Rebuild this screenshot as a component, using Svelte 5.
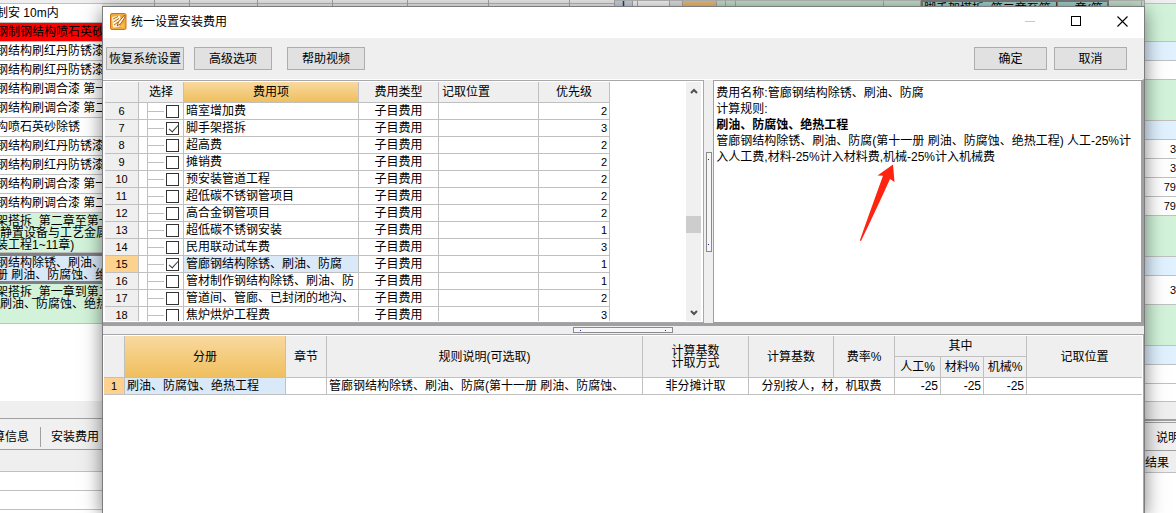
<script>
    const backLeft = [
        { h: 4, bg: '#efefef', lines: [] },
        { h: 19, bg: '#fff', lines: ['制安 10m内'] },
        { h: 19, bg: '#ff0000', lines: ['钢制钢结构喷石英砂'] },
        { h: 19, bg: '#fff', lines: ['钢结构刷红丹防锈漆'] },
        { h: 19, bg: '#fff', lines: ['钢结构刷红丹防锈漆'] },
        { h: 19, bg: '#fff', lines: ['钢结构刷调合漆 第一'] },
        { h: 19, bg: '#fff', lines: ['钢结构刷调合漆 第二'] },
        { h: 19, bg: '#fff', lines: ['构喷石英砂除锈'] },
        { h: 19, bg: '#fff', lines: ['钢结构刷红丹防锈漆'] },
        { h: 19, bg: '#fff', lines: ['钢结构刷红丹防锈漆'] },
        { h: 19, bg: '#fff', lines: ['钢结构刷调合漆 第一'] },
        { h: 19, bg: '#fff', lines: ['钢结构刷调合漆 第二'] },
        { h: 40, bg: '#d2f3da', lines: ['架搭拆_第二章至第一', '(静置设备与工艺金属', '装工程1~11章)'] },
        { h: 31, bg: '#d9e9f8', current: true, lines: ['钢结构除锈、刷油、', '册 刷油、防腐蚀、绝'] },
        { h: 40, bg: '#d2f3da', top: true, lines: ['架搭拆_第一章到第二', '(刷油、防腐蚀、绝热'] },
    ]

    const backRight = [
        { h: 4, bg: '#efefef' },
        { h: 38, bg: '#d2f3da' },
        { h: 19, bg: '#e0f2ff' },
        { h: 19, bg: '#fff' },
        { h: 41, bg: '#d2f3da' },
        { h: 19, bg: '#e0f2ff' },
        { h: 19, bg: '#fff', value: '3' },
        { h: 19, bg: '#fff', value: '3' },
        { h: 19, bg: '#fff', value: '79' },
        { h: 19, bg: '#fff', value: '79' },
        { h: 41, bg: '#d2f3da' },
        { h: 19, bg: '#e0f2ff' },
        { h: 29, bg: '#fff', value: '3' },
        { h: 41, bg: '#d2f3da' },
        { h: 19, bg: '#e0f2ff' },
        { h: 19, bg: '#fff' },
        { h: 18, bg: '#fff' },
    ]

    const strip = [
        { w: 53, bg: '#ececec', lined: true },
        { w: 35, bg: '#ececec', lined: true },
        { w: 68, bg: '#ececec', lined: true },
        { w: 75, bg: '#ececec', lined: true },
        { w: 75, bg: '#ececec', lined: true },
        { w: 81, bg: '#ececec', lined: true },
        { w: 81, bg: '#ececec', lined: true },
        { w: 45, bg: '#ececec', lined: true },
        { w: 8, bg: '#c3d2e4' },
        { w: 2, bg: '#3c3c40' },
        { w: 8, bg: '#c3d2e4' },
        { w: 5, bg: '#f4f4f4' },
        { w: 32, bg: '#f4f4f4' },
        { w: 13, bg: '#dedede' },
        { w: 34, bg: '#eabd74' },
        { w: 9, bg: '#bfe0c8' },
        { w: 10, bg: '#bfe0c8' },
        { w: 148, bg: '#bfe0c8' },
        { w: 37, bg: '#bfe0c8' },
        { w: 188, bg: '#9fcfc8', text: '脚手架搭拆_第二章至第十一章(第' },
        { w: 33, bg: '#bfe0c8' },
        { w: 3, bg: '#bfe0c8' },
    ]

    let fees = $state([
        { id: 6, name: '暗室增加费', level: 2, checked: false },
        { id: 7, name: '脚手架搭拆', level: 3, checked: true },
        { id: 8, name: '超高费', level: 2, checked: false },
        { id: 9, name: '摊销费', level: 2, checked: false },
        { id: 10, name: '预安装管道工程', level: 2, checked: false },
        { id: 11, name: '超低碳不锈钢管项目', level: 2, checked: false },
        { id: 12, name: '高合金钢管项目', level: 2, checked: false },
        { id: 13, name: '超低碳不锈钢安装', level: 1, checked: false },
        { id: 14, name: '民用联动试车费', level: 3, checked: false },
        { id: 15, name: '管廊钢结构除锈、刷油、防腐', level: 1, checked: true },
        { id: 16, name: '管材制作钢结构除锈、刷油、防', level: 1, checked: false },
        { id: 17, name: '管道间、管廊、已封闭的地沟、', level: 2, checked: false },
        { id: 18, name: '焦炉烘炉工程费', level: 3, checked: false },
    ])
    let selected = $state(15)
</script>

<div class="screen">
    <div class="backdrop">
        <div class="back-left">
            {#each backLeft as row}
                <div class="back-row" class:current={row.current} class:top={row.top} style="height: {row.h}px; background: {row.bg}">
                    {#each row.lines as line}
                        <div class="back-line">{line}</div>
                    {/each}
                </div>
            {/each}
            <div class="filler"></div>
            <div class="back-scroll"></div>
            <div class="back-tabs">
                <span class="tab-left">算信息</span>
                <span class="tab-right">安装费用</span>
            </div>
            <div class="back-head"></div>
            <div class="back-blank"></div>
            <div class="back-blank"></div>
        </div>
        <div class="strip">
            {#each strip as cell}
                <div class="strip-cell" class:lined={cell.lined} class:teal={cell.text} style="flex: 1 1 {cell.w}px; background-color: {cell.bg}">{cell.text ?? ''}</div>
            {/each}
        </div>
        <div class="back-right">
            {#each backRight as row}
                <div class="back-row value" style="height: {row.h}px; background: {row.bg}">{row.value ?? ''}</div>
            {/each}
            <div class="back-scroll"></div>
            <div class="back-tabs right"><span>说明</span></div>
            <div class="back-head">结果</div>
        </div>
    </div>

    <div class="dialog" role="dialog" aria-labelledby="dialog-title">
        <div class="title-bar">
            <svg class="logo" width="17" height="17" viewBox="0 0 17 17">
                <rect x="0.5" y="0.5" width="15.5" height="16" rx="1.5" fill="#f0a93a" stroke="#cd7412" />
                <path d="M2 4 L10 2.5 L11 9 L9 14 L3 14.5 Z" fill="#fff3d2" />
                <path d="M3 6 L8 3.5 M3.5 9 L9 5.5 M4 12 L9 8.5" stroke="#b56a16" />
                <path d="M14.5 2 L8.5 9 L7 13 L11 10.5 L15 4 Z" fill="#fff8e6" stroke="#a94e0a" stroke-width="0.9" />
                <path d="M10 14 L14 10 L14 14.5 Z" fill="#f8c44e" />
            </svg>
            <span id="dialog-title" class="title">统一设置安装费用</span>
            <button class="win-button" aria-label="最小化" disabled>
                <svg width="11" height="11"><path d="M0 5.5 H10" stroke="#c8c8c8" /></svg>
            </button>
            <button class="win-button" aria-label="最大化">
                <svg width="11" height="11"><rect x="0.5" y="0.5" width="9" height="9" fill="none" stroke="#000" /></svg>
            </button>
            <button class="win-button" aria-label="关闭">
                <svg width="11" height="11"><path d="M0.5 0.5 L10.5 10.5 M10.5 0.5 L0.5 10.5" stroke="#000" stroke-width="1.1" /></svg>
            </button>
        </div>

        <div class="toolbar">
            <button class="default-button">恢复系统设置</button>
            <button class="default-button second">高级选项</button>
            <button class="default-button third">帮助视频</button>
            <button class="default-button small ok">确定</button>
            <button class="default-button small">取消</button>
        </div>

        <div class="upper">
            <div class="fee-panel">
                <div class="fee-scroll">
                    <table class="grid fee-table">
                        <colgroup>
                            <col style="width: 34px" /><col style="width: 45px" /><col style="width: 175px" />
                            <col style="width: 80px" /><col style="width: 100px" /><col style="width: 71px" />
                        </colgroup>
                        <thead>
                            <tr>
                                <th></th>
                                <th>选择</th>
                                <th class="active">费用项</th>
                                <th>费用类型</th>
                                <th class="left">记取位置</th>
                                <th>优先级</th>
                            </tr>
                        </thead>
                        <tbody>
                            {#each fees as fee}
                                <tr class:selected={fee.id === selected} onclick={() => (selected = fee.id)}>
                                    <th class="digits">{fee.id}</th>
                                    <td class="pick">
                                        <div class="tree">
                                            <i></i>
                                            <input type="checkbox" id="fee-{fee.id}" bind:checked={fee.checked} />
                                        </div>
                                    </td>
                                    <td class="name"><label for="fee-{fee.id}">{fee.name}</label></td>
                                    <td class="center">子目费用</td>
                                    <td></td>
                                    <td class="number digits">{fee.level}</td>
                                </tr>
                            {/each}
                        </tbody>
                    </table>
                </div>
                <div class="scrollbar">
                    <button aria-label="向上滚动">
                        <svg width="8" height="6"><path d="M1 5 L4 2 L7 5" fill="none" stroke="#505050" stroke-width="2" /></svg>
                    </button>
                    <div class="track-before"></div>
                    <div class="thumb"></div>
                    <div class="track-after"></div>
                    <button aria-label="向下滚动">
                        <svg width="8" height="6"><path d="M1 1 L4 4 L7 1" fill="none" stroke="#505050" stroke-width="2" /></svg>
                    </button>
                </div>
            </div>
            <div class="splitter-v"><div class="grip grip-v"><i></i><i></i></div></div>
            <div class="detail">
                <p>费用名称:管廊钢结构除锈、刷油、防腐</p>
                <p>计算规则:</p>
                <p><b>刷油、防腐蚀、绝热工程</b></p>
                <p>管廊钢结构除锈、刷油、防腐(第十一册 刷油、防腐蚀、绝热工程) 人工-25%计<br />入人工费,材料-25%计入材料费,机械-25%计入机械费</p>
                <svg class="arrow" width="36" height="78" viewBox="0 0 36 78">
                    <path d="M34 0.5 L18.5 11.5 L24 11.8 Q13 42 0.8 76.5 L2 77 Q18 44 31 15 L35.5 18 Z" fill="#ff2412" />
                </svg>
            </div>
        </div>

        <div class="splitter-h"><div class="grip grip-h"><i></i><i></i></div></div>

        <div class="lower">
            <table class="grid rule-table">
                <colgroup>
                    <col style="width: 21px" /><col style="width: 161px" /><col style="width: 41px" />
                    <col style="width: 316px" /><col style="width: 106px" /><col style="width: 85px" />
                    <col style="width: 61px" /><col style="width: 46px" /><col style="width: 43px" />
                    <col style="width: 43px" /><col />
                </colgroup>
                <thead>
                    <tr>
                        <th rowspan="2"></th>
                        <th rowspan="2" class="active">分册</th>
                        <th rowspan="2">章节</th>
                        <th rowspan="2">规则说明(可选取)</th>
                        <th rowspan="2" class="two-line">计算基数<br />计取方式</th>
                        <th rowspan="2">计算基数</th>
                        <th rowspan="2">费率%</th>
                        <th colspan="3">其中</th>
                        <th rowspan="2">记取位置</th>
                    </tr>
                    <tr>
                        <th>人工%</th>
                        <th>材料%</th>
                        <th>机械%</th>
                    </tr>
                </thead>
                <tbody>
                    <tr class="selected">
                        <th class="digits">1</th>
                        <td class="name">刷油、防腐蚀、绝热工程</td>
                        <td></td>
                        <td>管廊钢结构除锈、刷油、防腐(第十一册 刷油、防腐蚀、</td>
                        <td class="center">非分摊计取</td>
                        <td class="center" colspan="2">分别按人，材，机取费</td>
                        <td class="number">-25</td>
                        <td class="number">-25</td>
                        <td class="number">-25</td>
                        <td></td>
                    </tr>
                </tbody>
            </table>
        </div>
    </div>
</div>

<style>
    :global(body) {
        margin: 0;
    }

    .screen {
        position: relative;
        box-sizing: border-box;
        min-height: 100vh;
        padding: 6px 31px 0 102px;
        overflow: hidden;
        font-family: "Liberation Sans", "Noto Sans CJK SC", sans-serif;
        font-size: 12px;
        line-height: 16px;
        color: #000;
        background: #fff;
    }

    .screen * {
        box-sizing: border-box;
    }

    /* application window behind the dialog */
    .backdrop {
        position: absolute;
        inset: 0;
        display: grid;
        grid-template-columns: 102px 1fr 31px;
    }

    .back-left,
    .back-right {
        display: flex;
        flex-direction: column;
        overflow: hidden;
    }

    .back-row {
        flex: none;
        overflow: hidden;
        display: flex;
        flex-direction: column;
        justify-content: center;
        border-bottom: 1px solid #c0c0c0;
        white-space: nowrap;
    }

    .back-row.current {
        border-top: 3px solid #808080;
        border-bottom: 3px solid #808080;
    }

    .back-row.top {
        justify-content: flex-start;
        padding-top: 2px;
    }

    .back-line {
        line-height: 12px;
        margin-left: -4px;
    }

    .back-row.value {
        text-align: right;
        font-size: 11px;
    }

    .filler {
        flex: none;
        height: 77px;
    }

    .back-scroll {
        flex: none;
        height: 18px;
        background: #efefef;
        border-bottom: 1px solid #a0a0a0;
    }

    .back-tabs {
        flex: none;
        display: flex;
        align-items: center;
        height: 31px;
        padding-top: 6px;
        background: #f0f0f0;
        border-bottom: 1px solid #a0a0a0;
        white-space: nowrap;
    }

    .tab-left {
        width: 41px;
        padding-right: 11px;
        display: flex;
        justify-content: flex-end;
        line-height: 20px;
        border-right: 1px solid #a0a0a0;
    }

    .tab-right {
        padding-left: 10px;
    }

    .back-tabs.right {
        padding: 2px 0 0 11px;
        border-top: 3px double #a0a0a0;
    }

    .back-head {
        flex: none;
        height: 22px;
        line-height: 24px;
        background: #efefef;
        border-bottom: 1px solid #c0c0c0;
    }

    .back-blank {
        flex: none;
        height: 19px;
        border-bottom: 1px solid #c0c0c0;
    }

    .strip {
        display: flex;
        height: 20px;
        overflow: hidden;
    }

    .strip-cell {
        min-width: 0;
        border-top: 1px solid #b8b8b8;
        border-right: 1px solid #a8a8a8;
        white-space: nowrap;
        line-height: 14px;
    }

    .strip-cell.lined {
        border-top: 0;
        background-image: linear-gradient(transparent 3px, #b8b8b8 3px, #b8b8b8 4px, transparent 4px);
    }

    .strip-cell.teal {
        padding-left: 1px;
        border: 2px solid #7c7c7c;
    }

    .dialog {
        position: relative;
        display: flex;
        flex-direction: column;
        min-height: calc(100vh - 6px);
        background: #efefef;
        border: 1px solid #7c7c80;
        border-bottom: 0;
        box-shadow: 0 4px 18px rgba(0, 0, 0, 0.5);
    }

    .title-bar {
        display: flex;
        align-items: center;
        height: 31px;
        padding-left: 7px;
        background: #fff;
    }

    .logo {
        flex: none;
        margin-top: -3px;
    }

    .title {
        flex: 1;
        padding-left: 4px;
        margin-top: -1px;
    }

    .win-button {
        width: 46px;
        height: 29px;
        margin-bottom: 3px;
        padding: 0 0 0 2px;
        display: flex;
        align-items: center;
        justify-content: center;
        border: 0;
        background: none;
    }

    .toolbar {
        display: flex;
        align-items: center;
        height: 41px;
        padding: 0 17px 0 3px;
    }

    .default-button {
        width: 78px;
        height: 23px;
        padding: 1px 0 0;
        border: 1px solid #adadad;
        background: #e1e1e1;
        font: inherit;
        color: inherit;
        white-space: nowrap;
    }

    .default-button.second {
        margin-left: 10px;
    }

    .default-button.third {
        margin-left: 15px;
    }

    .default-button.small {
        width: 73px;
    }

    .default-button.ok {
        margin-left: auto;
        margin-right: 7px;
    }

    .upper {
        display: flex;
        height: 247px;
        border-top: 1px solid #fff;
        border-right: 2px solid #a0a0a0;
        border-bottom: 3px solid #a0a0a0;
    }

    .fee-panel {
        flex: 601 1 0;
        min-width: 0;
        display: flex;
        padding: 1px 2px 1px 2px;
        background: #fff;
        border: 1px solid #a8a8ac;
        border-left: 0;
    }

    .fee-scroll {
        flex: 1;
        min-width: 0;
        overflow: hidden;
    }

    .grid {
        table-layout: fixed;
        border-collapse: separate;
        border-spacing: 0;
    }

    .grid th,
    .grid td {
        height: 17px;
        padding: 1px 2px 0;
        line-height: 15px;
        font-weight: normal;
        text-align: left;
        white-space: nowrap;
        overflow: hidden;
        border-right: 1px solid #c0c0c0;
        border-bottom: 1px solid #c0c0c0;
    }

    .grid th {
        padding: 1px 0 0;
        text-align: center;
        background: #efefef;
    }

    .grid th.active {
        background: linear-gradient(#f8d99f, #f0bf5e);
    }

    .grid th.left {
        padding-left: 3px;
        text-align: left;
    }

    .grid td.center {
        text-align: center;
    }

    .grid td.number {
        text-align: right;
    }

    .grid .digits {
        font-size: 11px;
    }

    .grid .selected th {
        background: #fdd28e;
    }

    .grid .selected .name {
        background: #d9e9f8;
    }

    .fee-table {
        width: 505px;
    }

    .fee-table thead th {
        height: 21px;
    }

    .grid td.pick {
        padding: 0 0 0 8px;
    }

    .tree {
        display: flex;
        align-items: center;
        height: 16px;
        border-left: 1px solid #c0c0c0;
    }

    .tree i {
        width: 16px;
        height: 1px;
        background: #c0c0c0;
    }

    .tree input {
        appearance: none;
        position: relative;
        flex: none;
        width: 13px;
        height: 13px;
        margin: 0 0 0 2px;
        border: 1px solid #333;
        background: #fff;
    }

    .tree input:checked::after {
        content: "";
        position: absolute;
        left: 4px;
        top: 0;
        width: 4px;
        height: 8px;
        border: solid #333;
        border-width: 0 1px 1px 0;
        transform: rotate(42deg);
    }

    .scrollbar {
        flex: none;
        display: flex;
        flex-direction: column;
        width: 15px;
        background: #f0f0f0;
    }

    .scrollbar button {
        display: flex;
        align-items: center;
        justify-content: center;
        height: 17px;
        padding: 0;
        border: 0;
        background: none;
    }

    .track-before {
        flex: 118;
    }

    .track-after {
        flex: 71;
    }

    .thumb {
        height: 17px;
        background: #cdcdcd;
    }

    .splitter-v {
        flex: none;
        display: flex;
        justify-content: center;
        align-items: center;
        width: 9px;
    }

    .grip {
        display: flex;
        align-items: center;
        justify-content: space-between;
        border: 1px solid #8a8a8a;
        background: #f6f6f6;
    }

    .grip i {
        width: 1px;
        height: 1px;
        background: #2020a0;
    }

    .grip-v {
        flex-direction: column;
        width: 6px;
        height: 100px;
        padding: 6px 0;
    }

    .grip-h {
        width: 100px;
        height: 6px;
        padding: 0 6px;
    }

    .detail {
        position: relative;
        flex: 428 1 0;
        min-width: 0;
        padding: 4px 0 0 2px;
        background: #fff;
        border: 1px solid #a0a0a0;
    }

    .detail p {
        margin: 0;
    }

    .arrow {
        position: absolute;
        left: 145px;
        top: 83px;
    }

    .splitter-h {
        display: flex;
        justify-content: center;
        height: 8px;
        padding: 1px 2px 0 0;
    }

    .lower {
        flex: 1;
        padding: 1px 1px 0 1px;
        background: #fff;
        border-top: 1px solid #a8a8ac;
        border-right: 1px solid #a8a8ac;
    }

    .rule-table {
        width: 100%;
    }

    .rule-table thead th {
        height: 21px;
    }

    .rule-table .two-line {
        line-height: 12px;
    }

    .rule-table th:last-child,
    .rule-table td:last-child {
        border-right: 0;
    }

    .rule-table thead tr:last-child th:last-child {
        border-right: 1px solid #c0c0c0;
    }
</style>
